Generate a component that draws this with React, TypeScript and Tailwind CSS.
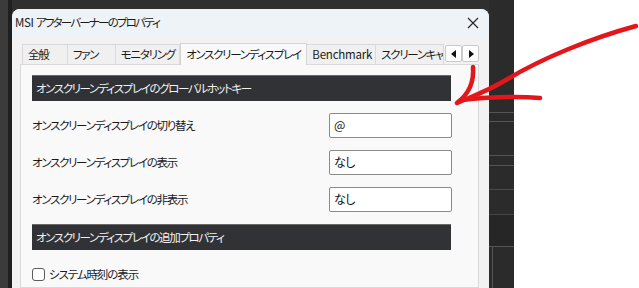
import type { ReactNode } from 'react'

const font = { fontFamily: '"Noto Sans CJK JP", "Noto Sans", sans-serif', fontFeatureSettings: '"palt"' }

interface Tab {
  label: string
  width: string
  active?: boolean
  latin?: boolean
}

const tabs: Tab[] = [
  { label: '全般', width: 'w-[46px]' },
  { label: 'ファン', width: 'w-[48px]' },
  { label: 'モニタリング', width: 'w-[64px]' },
  { label: 'オンスクリーンディスプレイ', width: 'w-[128px]', active: true },
  { label: 'Benchmark', width: 'w-[69px]', latin: true },
  { label: 'スクリーンキャプチャ', width: 'w-[68px]' },
]

const hotkeys = [
  { label: 'オンスクリーンディスプレイの切り替え', value: '@' },
  { label: 'オンスクリーンディスプレイの表示', value: 'なし' },
  { label: 'オンスクリーンディスプレイの非表示', value: 'なし' },
]

function SectionHeader({ children }: { children: ReactNode }) {
  return (
    <div className="w-[419px] h-[26px] bg-[#313236] border-t border-[#6a6a6a] flex items-center pl-[4px] text-[11.5px] tracking-[-1.4px] text-[#f2f2f2]">
      {children}
    </div>
  )
}

function ScrollButton({ dir }: { dir: 'left' | 'right' }) {
  return (
    <div className="w-[17px] h-[17px] bg-white border border-[#c9c9c9] rounded-[2px] flex items-center justify-center">
      <svg width="6" height="8" viewBox="0 0 6 8">
        {dir === 'left' ? <path d="M5 0 L0 4 L5 8 Z" fill="#111" /> : <path d="M1 0 L6 4 L1 8 Z" fill="#111" />}
      </svg>
    </div>
  )
}

export default function App() {
  return (
    <div className="relative w-[639px] h-[288px] overflow-hidden bg-white flex" style={font}>
      {/* desktop behind the dialog */}
      <div className="w-[514px] h-full bg-[#2f2f2f] flex">
        <div className="w-[12px] h-full flex">
          <div className="w-[8px] h-full bg-[#3b3b3b]" />
          <div className="w-[4px] h-full bg-[#1f1f1f]" />
        </div>

        {/* dialog */}
        <div className="pt-[9px] h-full">
          <div className="w-[477px] h-full rounded-t-[8px] overflow-hidden bg-[#f2f2f2] flex flex-col">
            <div className="h-[28px] bg-[#eef3f7] flex items-center justify-between pl-[3px] pr-[10px]">
              <span className="text-[11.5px] text-[#1a1a1a] whitespace-nowrap">
                <span className="tracking-[-0.3px]">MSI </span>
                <span className="tracking-[-1.8px]">アフターバーナーのプロパティ</span>
              </span>
              <svg width="12" height="12" viewBox="0 0 12 12">
                <path d="M1 1 L11 11 M11 1 L1 11" stroke="#222" strokeWidth="1.1" />
              </svg>
            </div>

            <div className="flex-1 pl-[8px] pr-[10px] pt-[5px] flex flex-col">
              <div className="flex items-end h-[22px] pl-[2px]">
                {tabs.map((t) =>
                  t.active ? (
                    <div
                      key={t.label}
                      className={`${t.width} h-[22px] bg-[#f9f9f9] border border-b-0 border-[#d5d5d5] flex items-center justify-center whitespace-nowrap text-[11.5px] tracking-[-1.3px] text-[#1a1a1a] relative z-10 -mb-px`}
                    >
                      {t.label}
                    </div>
                  ) : (
                    <div
                      key={t.label}
                      className={`${t.width} h-[20px] bg-[#f0f0f0] border border-b-0 border-l-0 first:border-l border-[#d9d9d9] flex items-center pl-[5px] text-[11.5px] ${
                        t.latin ? 'tracking-[-0.2px]' : 'tracking-[-1.3px]'
                      } text-[#1a1a1a] overflow-hidden whitespace-nowrap`}
                    >
                      {t.label}
                    </div>
                  ),
                )}
                <div className="flex self-start mt-[3px] ml-[1px]">
                  <ScrollButton dir="left" />
                  <ScrollButton dir="right" />
                </div>
              </div>

              <div className="flex-1 bg-[#f9f9f9] border border-[#d9d9d9] pl-[11px] pt-[10px] flex flex-col">
                <SectionHeader>オンスクリーンディスプレイのグローバルホットキー</SectionHeader>
                <div className="flex flex-col gap-[12px] mt-[12px]">
                  {hotkeys.map((h) => (
                    <div key={h.label} className="flex items-center w-[420px] justify-between">
                      <span className="text-[11.5px] tracking-[-1.3px] text-[#1a1a1a]">{h.label}</span>
                      <div className="w-[123px] h-[25px] bg-white border border-[#8a8a8a] rounded-[2px] pl-[4px] pt-[2px] text-[12px] tracking-[-0.5px] text-[#111] leading-[18px]">
                        {h.value}
                      </div>
                    </div>
                  ))}
                </div>
                <div className="mt-[12px]">
                  <SectionHeader>オンスクリーンディスプレイの追加プロパティ</SectionHeader>
                </div>
                <label className="flex items-center gap-[4px] mt-[16px]">
                  <span className="w-[13px] h-[13px] bg-white border border-[#5a5a5a] rounded-[3px]" />
                  <span className="text-[11.5px] tracking-[-1.1px] text-[#1a1a1a]">システム時刻の表示</span>
                </label>
              </div>
            </div>
          </div>
        </div>

        {/* window behind, right of dialog */}
        <div className="w-[25px] h-full bg-[#2b2b2b] flex flex-col">
          <div className="h-[113px] border-b border-[#555]" />
          <div className="h-[9px] border-b border-[#555]" />
          <div className="h-[34px] border-b border-[#555]" />
          <div className="h-[10px] border-b border-[#555]" />
          <div className="h-[24px] border-b border-[#4a4a4a]" />
          <div className="h-[25px] border-b border-[#444]" />
          <div className="h-[32px] border-b border-[#555] bg-[#262626]" />
          <div className="flex-1 ml-[3px] border-l border-[#555]" />
        </div>
      </div>

      {/* red annotation arrow */}
      <svg className="absolute left-0 top-0 pointer-events-none" width="639" height="288" viewBox="0 0 639 288">
        <g fill="none" stroke="#e3171b" strokeWidth="4.5" strokeLinecap="round" strokeLinejoin="round">
          <path d="M636 26 C 592 38 542 58 506 80 C 486 92 468 98 457 103" />
          <path d="M473 67 C 474 80 471 92 458 102" />
          <path d="M461 100 C 490 97 515 96 540 98" />
        </g>
      </svg>
    </div>
  )
}
